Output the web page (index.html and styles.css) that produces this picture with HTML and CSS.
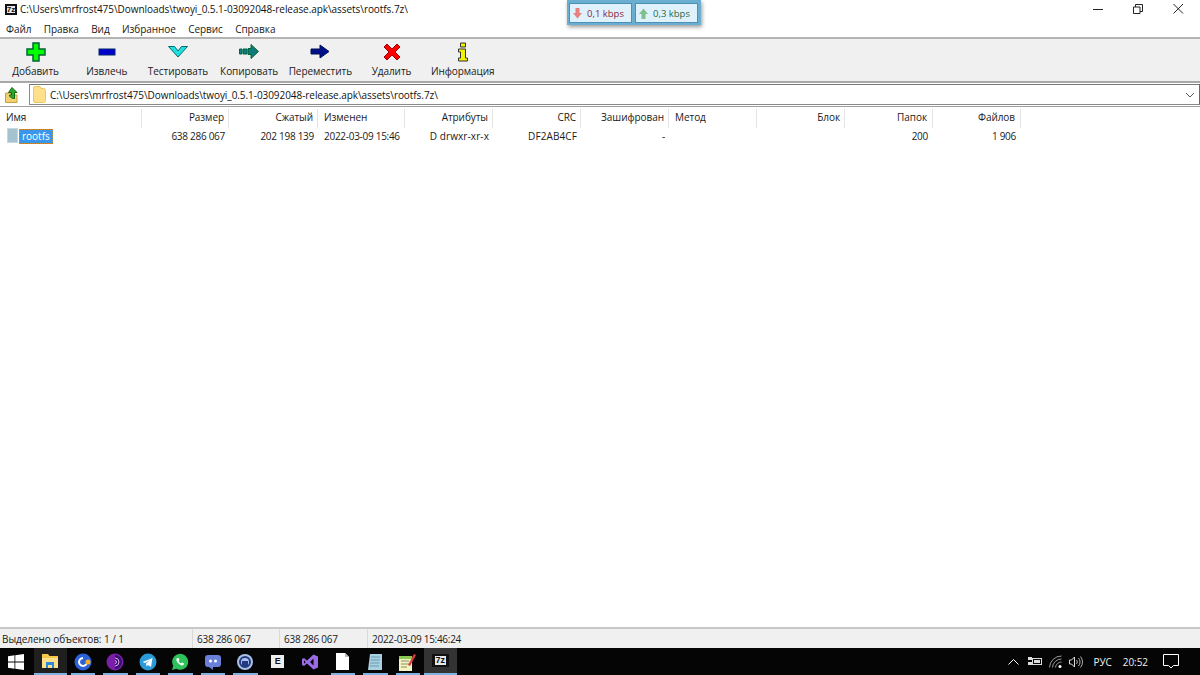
FILE: index.html
```html
<!DOCTYPE html>
<html lang="ru">
<head>
<meta charset="utf-8">
<title>7-Zip</title>
<link rel="stylesheet" href="styles.css">
</head>
<body>
<div class="app">
  <header class="titlebar">
    <div class="logo7z small"><span>7z</span></div>
    <div class="title">C:\Users\mrfrost475\Downloads\twoyi_0.5.1-03092048-release.apk\assets\rootfs.7z\</div>
    <div class="winbtns">
      <svg width="41" height="20" viewBox="0 0 41 20"><path d="M16 9.500h10" stroke="#222" fill="none"/></svg>
      <svg width="41" height="20" viewBox="0 0 41 20"><path d="M17.500 7V4.500h7v7H22M15.500 7h6.500v6.500h-6.500z" stroke="#222" fill="none"/></svg>
      <svg width="41" height="20" viewBox="0 0 41 20"><path d="M14.500 4l9.500 9.500M24 4l-9.500 9.500" stroke="#222" fill="none"/></svg>
    </div>
  </header>
  <nav class="menu">
    <span>Файл</span><span>Правка</span><span>Вид</span><span>Избранное</span><span>Сервис</span><span>Справка</span>
  </nav>
  <div class="toolbar">
    <div class="tool">
      <svg width="20" height="20" viewBox="0 0 20 20"><path d="M7 1h6v6h6v6h-6v6H7v-6H1V7h6z" fill="#0f0" stroke="#063" stroke-width="1.500"/></svg>
      <span>Добавить</span>
    </div>
    <div class="tool">
      <svg width="20" height="20" viewBox="0 0 20 20"><rect x="2" y="7" width="16" height="6" fill="#00c" stroke="#002a6a"/></svg>
      <span>Извлечь</span>
    </div>
    <div class="tool">
      <svg width="20" height="20" viewBox="0 0 20 20"><path d="M0.500 4.500h6L10 9l3.500-4.500h6L10 15z" fill="#1fe0e0" stroke="#086a6a"/></svg>
      <span>Тестировать</span>
    </div>
    <div class="tool">
      <svg width="20" height="20" viewBox="0 0 20 20"><path d="M0.500 7h2.500v5H0.500zM4 7h4v5H4z" fill="#157a7a" stroke="#064"/><path d="M9 6.500h3V2.500L19.500 9.500 12 16.500v-4H9z" fill="#107a78" stroke="#063"/></svg>
      <span>Копировать</span>
    </div>
    <div class="tool">
      <svg width="20" height="20" viewBox="0 0 20 20"><path d="M1 7h9V3l9 6.500L10 16v-4H1z" fill="#000f8a" stroke="#001050"/></svg>
      <span>Переместить</span>
    </div>
    <div class="tool">
      <svg width="20" height="20" viewBox="0 0 20 20"><path d="M2 5l3-3 5 5 5-5 3 3-5 5 5 5-3 3-5-5-5 5-3-3 5-5z" fill="#f00" stroke="#900"/></svg>
      <span>Удалить</span>
    </div>
    <div class="tool">
      <svg width="20" height="20" viewBox="0 0 20 20"><path d="M7.500 1h5v4h-5zM5.500 7h7v9h2v3h-9v-3h2v-6h-2z" fill="#f2f200" stroke="#333"/></svg>
      <span>Информация</span>
    </div>
  </div>
  <div class="addressrow">
    <svg class="upicon" width="13" height="16" viewBox="0 0 13 16"><path d="M0.500 6h5l1 2h5.500v7.500H0.500z" fill="#f0d070" stroke="#c8a040"/><path d="M7 .5l5 5h-2.500v6C6.500 11.500 4.500 10 4.500 8h2V5.500H3.500z" fill="#2fa52f" stroke="#0a6a0a"/></svg>
    <div class="address">
      <svg width="13" height="17" viewBox="0 0 13 17"><path d="M2 0.500h5l1 2h2.500a2 2 0 0 1 2 2v10a2 2 0 0 1-2 2H2a1.500 1.500 0 0 1-1.500-1.500V2A1.500 1.500 0 0 1 2 .5z" fill="#ffe08a" stroke="#e8c860"/></svg>
      <span class="addr-text">C:\Users\mrfrost475\Downloads\twoyi_0.5.1-03092048-release.apk\assets\rootfs.7z\</span>
      <svg class="chev" width="10" height="6" viewBox="0 0 10 6"><path d="M1 1l4 4 4-4" stroke="#555" fill="none"/></svg>
    </div>
  </div>
  <main class="list">
    <div class="grid head">
      <div class="l">Имя</div><div>Размер</div><div>Сжатый</div><div class="l">Изменен</div><div>Атрибуты</div><div>CRC</div><div>Зашифрован</div><div class="l">Метод</div><div>Блок</div><div>Папок</div><div>Файлов</div>
    </div>
    <div class="grid row">
      <div class="name"><i class="ficon"></i><span class="sel">rootfs</span></div><div>638 286 067</div><div>202 198 139</div><div class="l">2022-03-09 15:46</div><div class="tx">D drwxr-xr-x</div><div class="tx">DF2AB4CF</div><div>-</div><div></div><div></div><div>200</div><div>1 906</div>
    </div>
  </main>
  <footer class="status">
    <div class="s1">Выделено объектов: 1 / 1</div>
    <div class="s2">638 286 067</div>
    <div class="s3">638 286 067</div>
    <div class="s4">2022-03-09 15:46:24</div>
  </footer>
  <div class="taskbar">
    <svg class="start" width="16" height="16" viewBox="0 0 16 16"><path d="M0 2.200l6.500-.9v6.300H0zM7.300 1.200L16 0v7.600H7.300zM0 8.400h6.500v6.300L0 13.800zM7.300 8.400H16V16l-8.700-1.200z" fill="#fff"/></svg>
    <div class="tb act">
      <svg width="16" height="15" viewBox="0 0 16 15"><path d="M0 1h6l1.500 2H16v12H0z" fill="#f5c84a"/><path d="M0 5h16v10H0z" fill="#ffe08a"/><path d="M4 9h8v6h-2v-3H6v3H4z" fill="#2b8ad8"/></svg>
    </div>
    <div class="tb run">
      <svg width="18" height="18" viewBox="0 0 18 18"><circle cx="9" cy="9" r="8.500" fill="#2b62d8"/><path d="M9 5a4 4 0 1 0 3.500 6" stroke="#fff" stroke-width="2" fill="none"/><circle cx="14" cy="9" r="2.500" fill="#f0b020"/></svg>
    </div>
    <div class="tb run">
      <svg width="18" height="18" viewBox="0 0 18 18"><circle cx="9" cy="9" r="8.500" fill="#7a1fa8"/><path d="M9 2a7 7 0 0 1 0 14z" fill="#3a0f70"/><path d="M9 5a4 4 0 0 1 0 8M9 7.500a1.500 1.500 0 0 1 0 3" fill="none" stroke="#d8a8f0"/></svg>
    </div>
    <div class="tb run">
      <svg width="18" height="18" viewBox="0 0 18 18"><circle cx="9" cy="9" r="8.500" fill="#2a9ad8"/><path d="M3.500 9l10-4-1.500 9-3-2-1.500 1.500-.5-3 4-3.500-5 3z" fill="#fff"/></svg>
    </div>
    <div class="tb run">
      <svg width="18" height="18" viewBox="0 0 18 18"><path d="M1 17l1.200-4.300A8 8 0 1 1 5.300 15.800z" fill="#2fc25a"/><path d="M6 5c-1 1-1 3 1 5s4 3 5.500 2l.5-1.500-2-1-1 1c-1-.5-2-1.500-2.500-2.500l1-1-1-2z" fill="#fff"/></svg>
    </div>
    <div class="tb run">
      <svg width="18" height="16" viewBox="0 0 18 16"><rect x="1" y="1" width="16" height="12" rx="3" fill="#6a80d8"/><path d="M5 13l4 3v-3z" fill="#6a80d8"/><circle cx="6.500" cy="7" r="1.500" fill="#fff"/><circle cx="11.500" cy="7" r="1.500" fill="#fff"/></svg>
    </div>
    <div class="tb run">
      <svg width="18" height="18" viewBox="0 0 18 18"><circle cx="9" cy="9" r="8" fill="#a8c0e8"/><circle cx="9" cy="9" r="5" fill="none" stroke="#223a80" stroke-width="2"/><rect x="6" y="8" width="6" height="5" fill="#223a80"/></svg>
    </div>
    <div class="tb"><span class="ebox">E</span></div>
    <div class="tb">
      <svg width="16" height="16" viewBox="0 0 16 16"><path d="M11.500 0.500L16 2.500v11l-4.500 2L5 9.500 2 12l-2-1V5l2-1 3 2.500zM11.500 4.500L8 8l3.500 3.500zM2 6.300v3.400L3.700 8z" fill="#9a6ae8" fill-rule="evenodd"/></svg>
    </div>
    <div class="tb run">
      <svg width="13" height="17" viewBox="0 0 13 17"><path d="M0 0h9l4 4v13H0z" fill="#fff"/><path d="M9 0l4 4H9z" fill="#bbb"/></svg>
    </div>
    <div class="tb run">
      <svg width="14" height="18" viewBox="0 0 14 18"><path d="M2 1h12v16H0z" fill="#a8d0e0"/><path d="M3 4h9M2.700 7h9M2.300 10h9M2 13h9" stroke="#6a9ab0"/></svg>
    </div>
    <div class="tb run">
      <svg width="17" height="18" viewBox="0 0 17 18"><path d="M0 3h13v15H0z" fill="#f4f4c0"/><path d="M0 3h13v3H0z" fill="#8cc850"/><path d="M2 8h8M2 11h8M2 14h6" stroke="#8a8a70"/><path d="M9 12L15 1l2 1-6 11z" fill="#e03a3a"/></svg>
    </div>
    <div class="tb cur"><div class="logo7z"><span>7z</span></div></div>
    <div class="tray">
      <svg class="tr-up" width="11" height="7" viewBox="0 0 11 7"><path d="M.5 6.500l5-5 5 5" stroke="#fff" fill="none"/></svg>
      <svg class="tr-net" width="14" height="11" viewBox="0 0 14 11"><path d="M0 1h4v3H0zM0 6h4v3H0z" fill="#ddd"/><rect x="4.500" y="2.500" width="9" height="6" fill="none" stroke="#ddd"/><rect x="6" y="4" width="6" height="3" fill="#ddd"/></svg>
      <svg class="tr-wifi" width="13" height="13" viewBox="0 0 13 13"><path d="M.5 12.500A12 12 0 0 1 12.500 1M3.500 12.500A9 9 0 0 1 12.500 4M6.500 12.500A6 6 0 0 1 12.500 7" stroke="#999" fill="none"/><circle cx="11" cy="11.500" r="1.500" fill="#fff"/></svg>
      <svg class="tr-vol" width="14" height="14" viewBox="0 0 14 14"><path d="M.5 5h2l3-3v10l-3-3h-2z" stroke="#ddd" fill="none"/><path d="M7.500 5a3 3 0 0 1 0 4M9.500 3a6 6 0 0 1 0 8M11.500 1.500a8.500 8.500 0 0 1 0 11" stroke="#aaa" fill="none"/></svg>
      <span class="lang">РУС</span>
      <span class="clock">20:52</span>
      <svg class="notif" width="16" height="15" viewBox="0 0 16 15"><path d="M0.500 0.500h15v11h-5l-2.500 2.500-2.500-2.500h-5z" stroke="#fff" fill="none"/></svg>
    </div>
  </div>
  <div class="speed">
    <div class="sp down">
      <svg width="11" height="11" viewBox="0 0 11 11"><path d="M3.500 0h4v5H10L5.500 10.500 1 5h2.500z" fill="#e88080"/></svg>
      <span>0,1 kbps</span>
    </div>
    <div class="sp up">
      <svg width="11" height="11" viewBox="0 0 11 11"><path d="M3.500 11h4V6H10L5.500.5 1 6h2.500z" fill="#80c090"/></svg>
      <span>0,3 kbps</span>
    </div>
  </div>
</div>
</body>
</html>
```
FILE: styles.css
```css
* { box-sizing: border-box; }
html, body { margin: 0; padding: 0; height: 100%; overflow: hidden; }
body { font-family: "Open Sans", "Noto Sans", sans-serif; font-size: 10px; letter-spacing: -0.06px; color: #1a1a1a; background: #fff; }
.app { position: relative; width: 1200px; height: 675px; display: flex; flex-direction: column; }

.titlebar { height: 19px; display: flex; align-items: center; padding-left: 5px; gap: 3px; }
.title { flex: 1; white-space: nowrap; color: #111; position: relative; top: -1px; }
.winbtns { display: flex; align-self: flex-start; }
.logo7z { width: 17px; height: 13px; background: #111; display: flex; align-items: center; justify-content: center; }
.logo7z span { background: #e8e8e8; color: #111; font: bold 9px/9px "Liberation Sans", sans-serif; padding: 0 1px; }
.logo7z.small { width: 12px; height: 11px; }
.logo7z.small span { font-size: 8px; line-height: 7px; padding: 0; }

.menu { height: 18px; display: flex; gap: 12.400px; padding: 2px 0 0 6px; align-items: center; }
.toolbar { height: 46px; background: #f0f0f0; border-top: 2px solid #b4b4b4; border-bottom: 2px solid #a8a8a8; display: flex; }
.tool { width: 71.2px; display: flex; flex-direction: column; align-items: center; padding-top: 3px; gap: 1px; }
.tool span { white-space: nowrap; line-height: 14px; margin-top: 1px; }

.addressrow { height: 23px; display: flex; align-items: center; background: #fff; }
.upicon { margin-left: 5px; margin-right: 11px; }
.address { flex: 1; height: 21px; border: 1px solid #8a8a8a; border-right-color: #6a6a6a; border-top: 1px solid #777; display: flex; align-items: center; padding-left: 3px; gap: 4px; }
.addr-text { flex: 1; color: #111; }
.chev { margin-right: 4px; }

.list { flex: 1; padding-top: 2px; background: #fff; border-top: 1px solid #a0a0a0; }
.grid { display: grid; grid-template-columns: 142px 87px 89px 87px repeat(7, 88px); }
.grid > div { text-align: right; padding-right: 4px; white-space: nowrap; overflow: hidden; }
.grid > div:nth-child(n+10) { padding-right: 5px; }
.grid > .l { text-align: left; padding-left: 6px; padding-right: 0; }
.head { height: 19px; line-height: 17px; }
.head > div { border-right: 1px solid #e5e5e5; height: 19px; }
.row { height: 18px; line-height: 16px; letter-spacing: -0.28px; }
.grid > .tx { letter-spacing: 0.1px; }
.grid > .name { display: flex; align-items: flex-start; text-align: left; padding: 0 0 0 7px; overflow: visible; letter-spacing: 0; }
.ficon { width: 11px; height: 15px; background: #a2c3cf; display: block; border: 1px solid #c5d8de; }
.sel { background: #3a96ea; color: #fff; padding: 0 2px; height: 15px; line-height: 13px; margin: 1px 0 0 1px; border: 1px dotted #d08a30; }

.status { height: 21px; background: #f0f0f0; border-top: 2px solid #c8c8c8; display: flex; line-height: 20px; padding-left: 2px; }
.status > div { white-space: nowrap; }
.s1 { width: 191px; border-right: 1px solid #d9d9d9; }
.s2, .s3, .s4 { letter-spacing: -0.28px; }
.s2 { width: 87px; padding-left: 4px; border-right: 1px solid #d9d9d9; }
.s3 { width: 88px; padding-left: 4px; border-right: 1px solid #d9d9d9; }
.s4 { padding-left: 4px; }

.taskbar { height: 27px; background: #050505; display: flex; align-items: center; color: #fff; }
.start { margin: 0 0 0 8px; width: 16px; }
.tb { width: 32.500px; height: 27px; display: flex; align-items: center; justify-content: center; flex: none; position: relative; }
.tb:nth-of-type(1) { margin-left: 10px; }
.act { background: #1f1f1f; border-bottom: 2px solid #7fb4e0; }
.run::after { content: ""; position: absolute; left: 4px; right: 4px; bottom: 0; height: 2px; background: #7fb4e0; }
.cur { background: #333; border-bottom: 2px solid #7fb4e0; }
.ebox { background: #eee; color: #111; width: 13px; height: 13px; font: bold 9px/13px "Liberation Sans", sans-serif; text-align: center; display: block; }
.tray { margin-left: auto; display: flex; align-items: center; height: 27px; }
.tr-up { margin-right: 9px; }
.tr-net { margin-right: 7px; }
.tr-wifi { margin-right: 7px; }
.tr-vol { margin-right: 10px; }
.lang { margin-right: 11px; color: #eee; }
.clock { margin-right: 15px; color: #eee; }
.notif { margin-right: 21px; }

.speed { position: absolute; left: 567px; top: 0; width: 134px; height: 25px; background: #6aaed0; display: flex; gap: 3px; padding: 3px 3px 2px 2px; box-shadow: 1px 2px 4px rgba(0,0,0,.4); }
.sp { flex: 1; background: #dff2fc; border: 1px solid #4a90b8; display: flex; align-items: center; padding-left: 2px; gap: 4px; font-size: 9.500px; letter-spacing: 0; }
.down { color: #8a1f3a; }
.up { color: #1f6a4a; }
```
